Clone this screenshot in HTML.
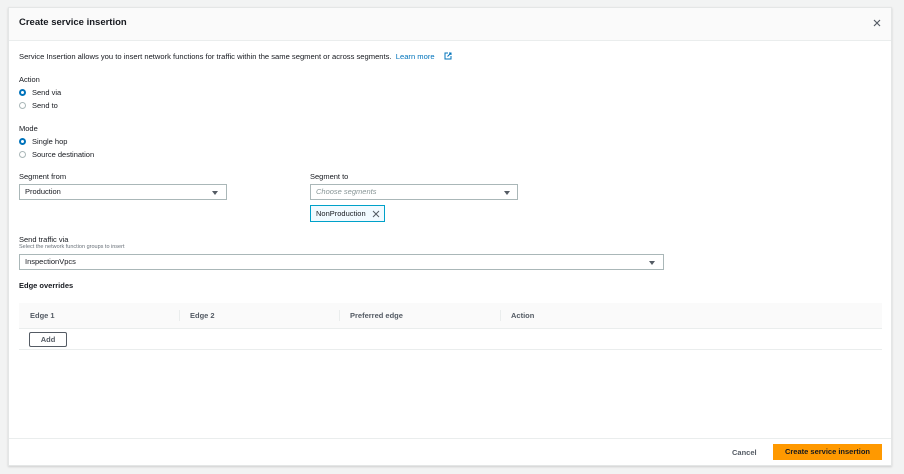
<!DOCTYPE html>
<html><head><meta charset="utf-8"><style>
*{box-sizing:border-box;margin:0;padding:0}
body{width:904px;height:474px;background:#f2f3f3;font-family:"Liberation Sans",sans-serif;color:#16191f;position:relative;overflow:hidden;font-size:7.5px;line-height:1.2}
.a{position:absolute}
#m{left:8px;top:7px;width:884px;height:459px;background:#fff;border:1px solid #e4e6e6;box-shadow:0 1px 2px rgba(0,0,0,.15)}
.hd{left:0;top:0;width:882px;height:33px;background:#fafafa;border-bottom:1px solid #eaeded}
.b{font-weight:bold}
.radio{width:7px;height:7px;border-radius:50%;border:1px solid #aab7b8;background:#fff}
.radio.on{border:2px solid #0073bb}
.sel{border:1px solid #aab7b8;background:#fff;height:16px;font-size:7.5px;padding:0 5px;line-height:14px}
.tri{width:0;height:0;border-left:3.5px solid transparent;border-right:3.5px solid transparent;border-top:4px solid #545b64}
.th{font-weight:bold;color:#545b64;font-size:7.5px}
.sep{width:1px;height:11px;background:#eaeded}
</style></head><body>
<div id="m" class="a">
 <div class="a hd"></div>
 <div class="a b" style="left:10px;top:9px;font-size:9.5px">Create service insertion</div>
 <svg class="a" style="left:864px;top:11px" width="8" height="8" viewBox="0 0 8 8"><path d="M1 1L7 7M7 1L1 7" stroke="#545b64" stroke-width="1.2"/></svg>
 <div class="a" style="left:10px;top:44px;font-size:7.6px;white-space:nowrap">Service Insertion allows you to insert network functions for traffic within the same segment or across segments.&nbsp;&nbsp;<span style="color:#0073bb">Learn more</span></div>
 <svg class="a" style="left:435px;top:44px" width="8" height="8" viewBox="0 0 8 8"><path d="M4 1H1V7H7V4M5 1H7V3M7 1L3.5 4.5" stroke="#0073bb" stroke-width="1" fill="none"/></svg>
 <div class="a" style="left:10px;top:67px">Action</div>
 <div class="a radio on" style="left:10px;top:81px"></div><div class="a" style="left:23px;top:80px">Send via</div>
 <div class="a radio" style="left:10px;top:94px"></div><div class="a" style="left:23px;top:93px">Send to</div>
 <div class="a" style="left:10px;top:116px">Mode</div>
 <div class="a radio on" style="left:10px;top:130px"></div><div class="a" style="left:23px;top:129px">Single hop</div>
 <div class="a radio" style="left:10px;top:143px"></div><div class="a" style="left:23px;top:142px">Source destination</div>
 <div class="a" style="left:10px;top:164px">Segment from</div>
 <div class="a sel" style="left:10px;top:176px;width:208px">Production</div>
 <div class="a tri" style="left:203px;top:183px"></div>
 <div class="a" style="left:301px;top:164px">Segment to</div>
 <div class="a sel" style="left:301px;top:176px;width:208px;color:#879596;font-style:italic">Choose segments</div>
 <div class="a tri" style="left:495px;top:183px"></div>
 <div class="a" style="left:301px;top:197px;width:75px;height:17px;border:1px solid #00a1c9;background:#f1faff;padding:0 5px;line-height:15px">NonProduction</div>
 <svg class="a" style="left:363px;top:202px" width="8" height="8" viewBox="0 0 8 8"><path d="M1 1L7 7M7 1L1 7" stroke="#545b64" stroke-width="1"/></svg>
 <div class="a" style="left:10px;top:227px">Send traffic via</div>
 <div class="a" style="left:10px;top:236px;font-size:5.5px;color:#687078">Select the network function groups to insert</div>
 <div class="a sel" style="left:10px;top:246px;width:645px">InspectionVpcs</div>
 <div class="a tri" style="left:640px;top:253px"></div>
 <div class="a b" style="left:10px;top:273px">Edge overrides</div>
 <div class="a" style="left:10px;top:295px;width:863px;height:26px;background:#fafafa;border-bottom:1px solid #eaeded"></div>
 <div class="a th" style="left:21px;top:303px">Edge 1</div>
 <div class="a sep" style="left:170px;top:302px"></div>
 <div class="a th" style="left:181px;top:303px">Edge 2</div>
 <div class="a sep" style="left:330px;top:302px"></div>
 <div class="a th" style="left:341px;top:303px">Preferred edge</div>
 <div class="a sep" style="left:491px;top:302px"></div>
 <div class="a th" style="left:502px;top:303px">Action</div>
 <div class="a b" style="left:20px;top:324px;width:38px;height:15px;border:1px solid #545b64;border-radius:2px;text-align:center;line-height:13px;color:#545b64">Add</div>
 <div class="a" style="left:10px;top:341px;width:863px;height:1px;background:#eaeded"></div>
 <div class="a" style="left:0;top:430px;width:882px;height:1px;background:#eaeded"></div>
 <div class="a b" style="left:723px;top:440px;color:#545b64">Cancel</div>
 <div class="a b" style="left:764px;top:436px;width:109px;height:16px;background:#ff9900;text-align:center;line-height:16px">Create service insertion</div>
</div>
</body></html>
